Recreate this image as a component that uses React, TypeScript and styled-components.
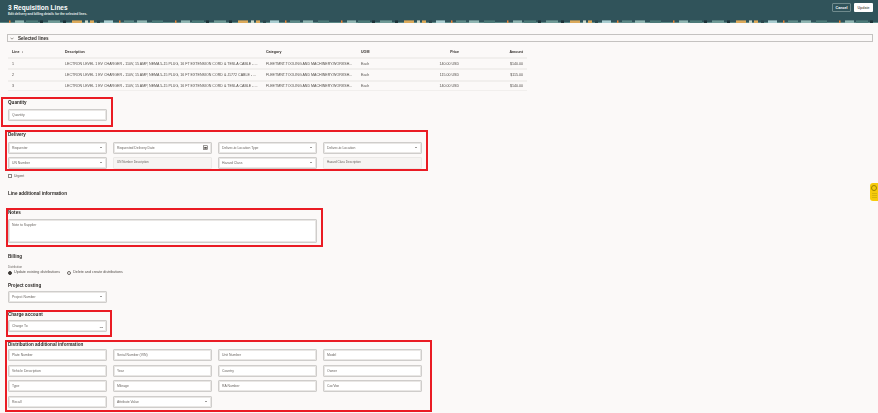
import React from 'react';
import styled, { createGlobalStyle } from 'styled-components';

const GlobalStyle = createGlobalStyle`
  html, body {
    margin: 0;
    padding: 0;
    background: #fbf9f8;
    overflow: hidden;
  }
  body {
    font-family: "Liberation Sans", Arial, sans-serif;
    color: #312d2a;
  }
`;

// the source screenshot is a scaled-down capture, so everything is a touch soft
const Page = styled.div`
  width: 878px;
  height: 413px;
  position: relative;
  overflow: hidden;
  filter: blur(0.3px);
`;

const Header = styled.header`
  height: 23px;
  background: #30535a;
  position: relative;
  display: flex;
  justify-content: space-between;
  align-items: flex-start;
  padding: 3px 5px 0 8px;
  box-sizing: border-box;
`;

const HeaderStrip = styled.svg`
  position: absolute;
  left: 0;
  bottom: 0;
  width: 878px;
  height: 3px;
`;

const HeaderText = styled.div`
  display: flex;
  flex-direction: column;
`;

const PageTitle = styled.h1`
  margin: 0;
  font-size: 6.5px;
  line-height: 9px;
  font-weight: 700;
  color: #fff;
`;

const PageSubtitle = styled.div`
  font-size: 3.15px;
  line-height: 5px;
  font-weight: 700;
  color: #e8eeee;
`;

const HeaderActions = styled.div`
  display: flex;
  gap: 3px;
`;

const HeaderButton = styled.button<{ $primary?: boolean }>`
  width: 19px;
  height: 9px;
  padding: 0;
  border: ${(p) => (p.$primary ? 'none' : '1px solid #6f8a8d')};
  border-radius: 1px;
  background: ${(p) => (p.$primary ? '#fff' : 'transparent')};
  color: ${(p) => (p.$primary ? '#6b6662' : '#fff')};
  font: 700 3.6px "Liberation Sans", Arial, sans-serif;
  box-sizing: border-box;
`;

const Collapse = styled.div`
  margin: 11px 5px 0 7px;
  height: 8px;
  border: 1px solid #c4c2c0;
  background: #fbf9f8;
  box-sizing: border-box;
  display: flex;
  align-items: center;
  gap: 4px;
  padding-left: 2px;
  font-size: 4.6px;
  font-weight: 700;
`;

const Table = styled.table`
  margin: 5px 0 0 8px;
  width: 519px;
  border-collapse: separate;
  border-spacing: 0;
  table-layout: fixed;
  font-size: 3.6px;
`;

const HeadCell = styled.th<{ $w: number; $right?: boolean }>`
  width: ${(p) => p.$w}px;
  height: 10px;
  padding: 0 ${(p) => (p.$right ? 4 : 0)}px 0 ${(p) => (p.$right ? 0 : 4)}px;
  text-align: ${(p) => (p.$right ? 'right' : 'left')};
  font-weight: 700;
  box-sizing: border-box;
  white-space: nowrap;
`;

const BodyCell = styled.td<{ $right?: boolean }>`
  height: 11.3px;
  padding: 0 ${(p) => (p.$right ? 4 : 0)}px 0 ${(p) => (p.$right ? 0 : 4)}px;
  text-align: ${(p) => (p.$right ? 'right' : 'left')};
  border-top: 2px solid #f1efed;
  box-sizing: border-box;
  white-space: nowrap;
  overflow: hidden;
  color: #4f4a46;
`;

const LastRowEdge = styled.tr`
  td {
    border-bottom: 1px solid #f1efed;
  }
`;

const Highlight = styled.section<{
  $left: number;
  $width: number;
  $top: number;
  $pad: number;
  $pt?: number;
  $pb?: number;
}>`
  margin: ${(p) => p.$top}px 0 0 ${(p) => p.$left}px;
  width: ${(p) => p.$width}px;
  padding: ${(p) => p.$pt ?? 0}px 0 ${(p) => p.$pb ?? 0}px ${(p) => p.$pad}px;
  border: 2px solid #ea1c24;
  box-sizing: border-box;
`;

const SectionTitle = styled.h3<{ $mb: number }>`
  margin: 0 0 ${(p) => p.$mb}px;
  font-size: 4.6px;
  line-height: 5px;
  font-weight: 700;
  color: #2b2825;
  white-space: nowrap;
`;

const Plain = styled.div<{ $top: number }>`
  margin: ${(p) => p.$top}px 0 0 8px;
`;

const FieldGrid = styled.div<{ $rowGap: number }>`
  display: grid;
  grid-template-columns: repeat(4, 99px);
  column-gap: 6px;
  row-gap: ${(p) => p.$rowGap}px;
`;

const Field = styled.div<{ $readOnly?: boolean; $height?: number; $width?: number }>`
  width: ${(p) => (p.$width ? `${p.$width}px` : 'auto')};
  height: ${(p) => p.$height ?? 12}px;
  box-sizing: border-box;
  border: 1px solid ${(p) => (p.$readOnly ? '#ebe9e7' : '#cfcdcb')};
  box-shadow: ${(p) => (p.$readOnly ? 'none' : 'inset 0 0 0 1px #e9e7e5')};
  border-radius: 1px;
  background: ${(p) => (p.$readOnly ? '#f6f4f2' : '#fff')};
  display: flex;
  align-items: ${(p) => (p.$readOnly || p.$height ? 'flex-start' : 'center')};
  justify-content: space-between;
  padding: ${(p) => (p.$height ? 3 : p.$readOnly ? 2 : 0)}px 3px 0 3px;
  font-size: ${(p) => (p.$readOnly ? 3 : 3.4)}px;
  line-height: 4px;
  color: #6b6662;
  white-space: nowrap;
`;

const Caret = styled.span`
  width: 0;
  height: 0;
  margin-right: 1px;
  border-left: 1.5px solid transparent;
  border-right: 1.5px solid transparent;
  border-top: 1.8px solid #3a3633;
`;

const Dots = styled.span`
  font-size: 5px;
  line-height: 4px;
  font-weight: 700;
  letter-spacing: -0.2px;
  color: #55504c;
`;

const CalendarIcon = styled.svg`
  width: 5px;
  height: 5px;
`;

const CheckRow = styled.label`
  display: flex;
  align-items: center;
  gap: 2px;
  margin: 3px 0 0 8px;
  height: 5px;
  font-size: 3.4px;
  color: #55504c;
`;

const CheckBox = styled.span`
  width: 4px;
  height: 4px;
  box-sizing: border-box;
  border: 0.7px solid #8a8581;
  background: #fff;
`;

const SubHeading = styled.div`
  font-size: 4.6px;
  line-height: 6px;
  font-weight: 700;
  color: #2b2825;
`;

const TinyLabel = styled.div`
  margin-top: 6px;
  font-size: 2.8px;
  line-height: 3px;
  color: #6b6662;
`;

const RadioRow = styled.div`
  display: flex;
  gap: 7px;
  margin-top: 1.5px;
  font-size: 3.7px;
  line-height: 5px;
  color: #55504c;
`;

const RadioOption = styled.span`
  display: flex;
  align-items: center;
  gap: 2px;
`;

const RadioDot = styled.span<{ $on?: boolean }>`
  width: 4px;
  height: 4px;
  border-radius: 50%;
  box-sizing: border-box;
  border: ${(p) => (p.$on ? '1px solid #3f3b38' : '0.7px solid #6b6662')};
  background: ${(p) => (p.$on ? '#3f3b38' : '#fff')};
`;

const FloatTab = styled.div`
  position: absolute;
  right: 0;
  top: 183px;
  width: 8px;
  height: 18px;
  background: #f6cb0c;
  border-radius: 3px 0 0 3px;
  display: flex;
  flex-direction: column;
  align-items: center;
  gap: 2px;
  padding-top: 2px;
  box-sizing: border-box;
`;

const FloatBadge = styled.span`
  width: 6px;
  height: 6px;
  box-sizing: border-box;
  border: 1px solid #9c8200;
  border-radius: 50%;
`;

const FloatLines = styled.span`
  width: 5px;
  height: 6px;
  background: repeating-linear-gradient(#d8b40c 0 1px, #f6cb0c 1px 2px);
`;

const STRIP_BITS = [
  { x: 9, w: 1.5, c: '#e4843a' },
  { x: 15, w: 9, c: '#8fb5b1' },
  { x: 26, w: 12, c: '#4c7a78' },
  { x: 40, w: 3, c: '#1d3338' },
  { x: 48, w: 12, c: '#6f9a96' },
  { x: 63, w: 3, c: '#1d3338' },
  { x: 72, w: 10, c: '#dba95a' },
  { x: 85, w: 3, c: '#c9d6c8' },
  { x: 90, w: 4, c: '#dba95a' },
  { x: 97, w: 3, c: '#2a474c' },
  { x: 104, w: 9, c: '#a9cdd0' },
  { x: 119, w: 1.5, c: '#e4843a' },
  { x: 124, w: 10, c: '#5e8a88' },
  { x: 137, w: 10, c: '#8fb5b1' },
  { x: 152, w: 11, c: '#4c7a78' },
];

const STRIP_PERIOD = 166;

const HeaderPattern = () => (
  <HeaderStrip viewBox="0 0 878 3" preserveAspectRatio="none">
    <rect x="0" y="2" width="878" height="1" fill="#5a8684" />
    {Array.from({ length: 6 }).flatMap((_, i) =>
      STRIP_BITS.map((b) => (
        <rect key={`${i}-${b.x}`} x={b.x + i * STRIP_PERIOD} y="0.4" width={b.w} height="2.6" fill={b.c} />
      )),
    )}
  </HeaderStrip>
);

const DESC_A = 'LECTRON LEVEL 1 EV CHARGER - 110V, 15 AMP, NEMA 5-15 PLUG, 16 FT EXTENSION CORD & TESLA CABLE - ...';
const DESC_B = 'LECTRON LEVEL 1 EV CHARGER - 110V, 15 AMP, NEMA 5-15 PLUG, 16 FT EXTENSION CORD & J1772 CABLE - ...';
const CATEGORY = 'FLEETMNT.TOOLING AND MACHINERY.WORKSH...';

const LINES = [
  { line: 1, desc: DESC_A, price: '140.00 USD', amount: '$140.00' },
  { line: 2, desc: DESC_B, price: '115.00 USD', amount: '$115.00' },
  { line: 3, desc: DESC_A, price: '140.00 USD', amount: '$140.00' },
];

const Select = ({ label, width }: { label: string; width?: number }) => (
  <Field $width={width}>
    {label}
    <Caret />
  </Field>
);

const DISTRIBUTION_FIELDS = [
  'Plate Number', 'Serial Number (VIN)', 'Unit Number', 'Model',
  'Vehicle Description', 'Year', 'Country', 'Owner',
  'Type', 'Mileage', 'RA Number', 'Car/Van',
  'Recall',
];

export default function App() {
  return (
    <Page>
      <GlobalStyle />
      <Header>
        <HeaderText>
          <PageTitle>3 Requisition Lines</PageTitle>
          <PageSubtitle>Edit delivery and billing details for the selected lines.</PageSubtitle>
        </HeaderText>
        <HeaderActions>
          <HeaderButton>Cancel</HeaderButton>
          <HeaderButton $primary>Update</HeaderButton>
        </HeaderActions>
        <HeaderPattern />
      </Header>

      <Collapse>
        <svg width="4" height="3" viewBox="0 0 4 3">
          <path d="M0.5 0.7 L2 2.2 L3.5 0.7" fill="none" stroke="#55504c" strokeWidth="0.6" />
        </svg>
        Selected lines
      </Collapse>

      <Table>
        <thead>
          <tr>
            <HeadCell $w={53}>Line&nbsp;&nbsp;↕</HeadCell>
            <HeadCell $w={201}>Description</HeadCell>
            <HeadCell $w={95}>Category</HeadCell>
            <HeadCell $w={40}>UOM</HeadCell>
            <HeadCell $w={66} $right>Price</HeadCell>
            <HeadCell $w={64} $right>Amount</HeadCell>
          </tr>
        </thead>
        <tbody>
          {LINES.map((l, i) => {
            const Row = i === LINES.length - 1 ? LastRowEdge : 'tr';
            return (
              <Row key={l.line}>
                <BodyCell>{l.line}</BodyCell>
                <BodyCell>{l.desc}</BodyCell>
                <BodyCell>{CATEGORY}</BodyCell>
                <BodyCell>Each</BodyCell>
                <BodyCell $right>{l.price}</BodyCell>
                <BodyCell $right>{l.amount}</BodyCell>
              </Row>
            );
          })}
        </tbody>
      </Table>

      <Highlight $left={1} $width={112} $top={6} $pad={5} $pt={1} $pb={4}>
        <SectionTitle $mb={4}>Quantity</SectionTitle>
        <Field $width={99}>Quantity</Field>
      </Highlight>

      <Highlight $left={5} $width={423} $top={3} $pad={1}>
        <SectionTitle $mb={5}>Delivery</SectionTitle>
        <FieldGrid $rowGap={3}>
          <Select label="Requester" />
          <Field>
            Requested Delivery Date
            <CalendarIcon viewBox="0 0 10 10">
              <rect x="1" y="1.5" width="8" height="7.5" fill="none" stroke="#55504c" strokeWidth="1.2" />
              <rect x="2.5" y="4" width="5" height="3.5" fill="#55504c" />
            </CalendarIcon>
          </Field>
          <Select label="Deliver-to Location Type" />
          <Select label="Deliver-to Location" />
          <Select label="UN Number" />
          <Field $readOnly>UN Number Description</Field>
          <Select label="Hazard Class" />
          <Field $readOnly>Hazard Class Description</Field>
        </FieldGrid>
      </Highlight>

      <CheckRow>
        <CheckBox />
        Urgent
      </CheckRow>

      <Plain $top={12}>
        <SubHeading>Line additional information</SubHeading>
      </Plain>

      <Highlight $left={6} $width={317} $top={11} $pad={0} $pb={2}>
        <SectionTitle $mb={4}>Notes</SectionTitle>
        <Field $height={24} $width={309}>Note to Supplier</Field>
      </Highlight>

      <Plain $top={7}>
        <SubHeading>Billing</SubHeading>
        <TinyLabel>Distribution</TinyLabel>
        <RadioRow>
          <RadioOption>
            <RadioDot $on />
            Update existing distributions
          </RadioOption>
          <RadioOption>
            <RadioDot />
            Delete and create distributions
          </RadioOption>
        </RadioRow>
      </Plain>

      <Plain $top={7.5}>
        <SectionTitle $mb={3}>Project costing</SectionTitle>
        <Select label="Project Number" width={99} />
      </Plain>

      <Highlight $left={6} $width={106} $top={7.5} $pad={0} $pb={2.5}>
        <SectionTitle $mb={3}>Charge account</SectionTitle>
        <Field $width={99}>
          Charge To
          <Dots>...</Dots>
        </Field>
      </Highlight>

      <Highlight $left={5} $width={427} $top={3} $pad={1} $pb={2}>
        <SectionTitle $mb={2.5}>Distribution additional information</SectionTitle>
        <FieldGrid $rowGap={3.5}>
          {DISTRIBUTION_FIELDS.map((name) => (
            <Field key={name}>{name}</Field>
          ))}
          <Select label="Attribute Value" />
        </FieldGrid>
      </Highlight>

      <FloatTab>
        <FloatBadge />
        <FloatLines />
      </FloatTab>
    </Page>
  );
}
